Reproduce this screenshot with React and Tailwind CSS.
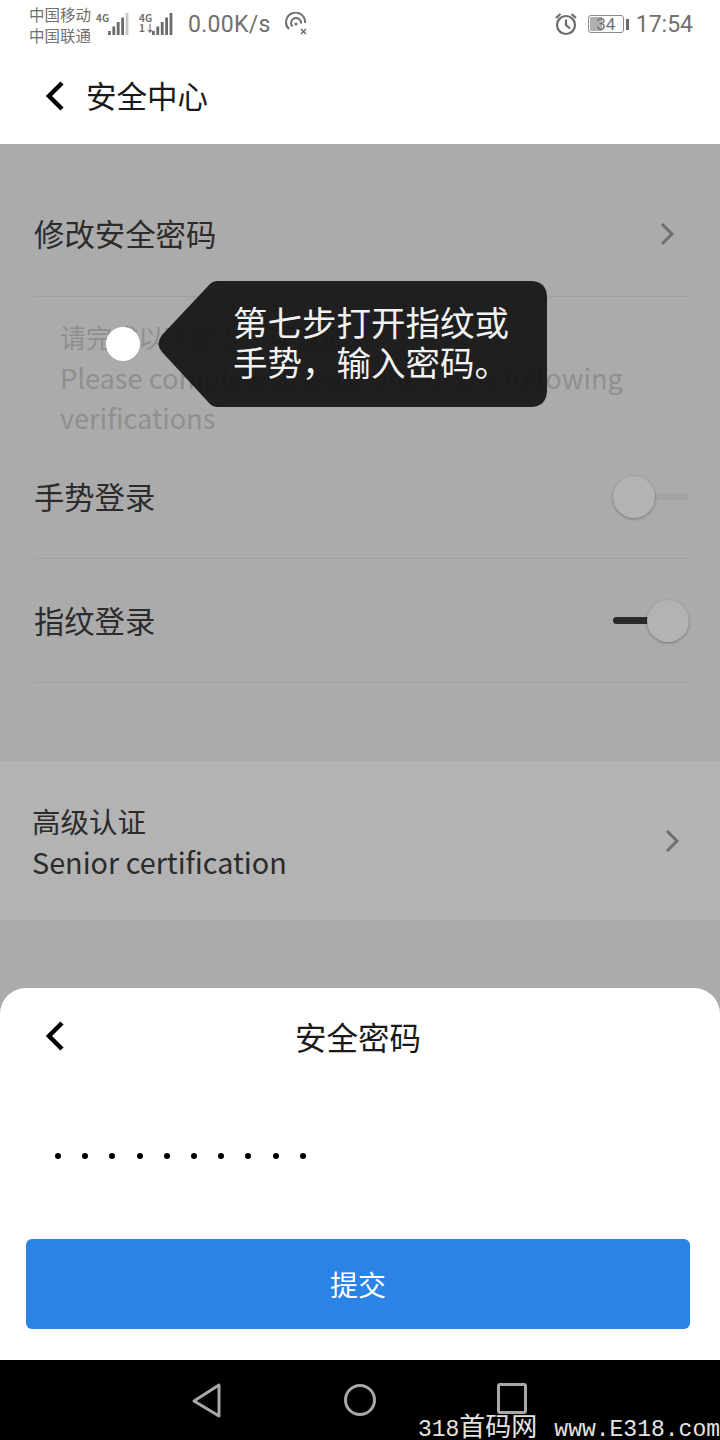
import React from "react";

const cjk = "font-['Noto_Sans_CJK_SC','Noto_Sans',sans-serif]";

const Bars = ({ lit = 5 }) => (
  <svg width="22" height="22" viewBox="0 0 22 22">
    {[0, 1, 2, 3, 4].map((i) => (
      <rect
        key={i}
        x={i * 4.4}
        y={18 - i * 4.500}
        width="2.8"
        height={4 + i * 4.500}
        fill={i < lit ? "#6b6b6b" : "#c8c8c8"}
      />
    ))}
  </svg>
);

const StatusBar = () => (
  <div className="flex h-[48px] items-center bg-white pl-[29px] pr-[27px] text-[#707070]">
    <div className="flex w-[67px] flex-col pt-[1px] text-[15.5px] leading-[21px]">
      <span>中国移动</span>
      <span>中国联通</span>
    </div>
    <div className="flex h-[22px] items-start">
      <div className="w-[12px] text-[10px] leading-[10px] font-bold">4G</div>
      <Bars lit={4} />
      <div className="ml-[9px] flex w-[13px] flex-col text-[10px] leading-[10px] font-bold">
        <span>4G</span>
        <span>1↓</span>
      </div>
      <Bars />
    </div>
    <span className="ml-[14px] pt-[3px] font-['Roboto',sans-serif] text-[23px] tracking-[0.3px]">0.00K/s</span>
    <svg className="ml-[13px]" width="24" height="24" viewBox="0 0 24 24" fill="none" stroke="#707070" strokeWidth="2">
      <path d="M5 17a9.5 9.5 0 1 1 16-6" />
      <path d="M8.5 14.5a5 5 0 1 1 8.5-3" />
      <circle cx="12" cy="12" r="1.6" fill="#707070" stroke="none" />
      <path d="M17 17l5 5M22 17l-5 5" strokeWidth="1.6" />
    </svg>
    <div className="ml-auto flex items-center">
      <svg width="24" height="26" viewBox="0 0 24 26" fill="none" stroke="#6b6b6b" strokeWidth="2.2">
        <circle cx="12" cy="14" r="9" />
        <path d="M12 8.5V14l4 3.5M2 7l4.5-4M22 7l-4.500-4" />
      </svg>
      <div className="relative ml-[10px] flex h-[18px] w-[36px] items-center justify-center overflow-hidden rounded-[3px] border border-[#8a8a8a] font-['Roboto',sans-serif] text-[17px] leading-none">
        <div className="absolute inset-y-[1px] left-[1px] w-[12px] bg-[#b0b0b0]" />
        <span className="relative">34</span>
      </div>
      <div className="ml-[2px] h-[11px] w-[3px] bg-[#6b6b6b]" />
      <span className="ml-[7px] pt-[3px] font-['Roboto',sans-serif] text-[23px]">17:54</span>
    </div>
  </div>
);

const Back = ({ className }) => (
  <svg className={className} width="20" height="32" viewBox="0 0 20 32" fill="none" stroke="#000" strokeWidth="4.500">
    <path d="M17 3 L4 16 L17 29" />
  </svg>
);

const Chevron = () => (
  <svg width="16" height="26" viewBox="0 0 16 26" fill="none" stroke="#6f6f6f" strokeWidth="3">
    <path d="M3 3 L13 13 L3 23" />
  </svg>
);

const Toggle = ({ on }) => (
  <div className="relative mt-[1px] h-[42px] w-[76px]">
    <div className={`absolute inset-x-0 top-[17px] h-[7px] rounded-full ${on ? "bg-[#2a2a2a]" : "bg-[#a3a3a3]"}`} />
    <div
      className={`absolute top-0 h-[42px] w-[42px] rounded-full bg-[#b3b3b3] shadow-[0_1px_3px_rgba(0,0,0,0.3)] ${on ? "right-0" : "left-0"}`}
    />
  </div>
);

const Row = ({ label, on }) => (
  <div className="flex h-[124px] items-center justify-between border-b border-[#a0a0a0]">
    <span className="ml-[1px] text-[30.3px] leading-none text-[#2b2b2b]">{label}</span>
    <Toggle on={on} />
  </div>
);

const Tooltip = () => (
  <div className="absolute top-[136px] left-[106px] flex items-center">
    <div className="h-[34px] w-[34px] rounded-full bg-white" />
    <div className="relative ml-[18px] h-[128px] w-[390px]">
      <svg className="absolute inset-0" width="390" height="128" viewBox="0 0 390 128">
        <path
          d="M4 55 L52 4 Q55 1 60 1 L372 1 Q389 1 389 18 L389 110 Q389 127 372 127 L60 127 Q55 127 52 124 L4 72 Q-3 64 4 55 Z"
          fill="#0f0f0f"
          fillOpacity="0.9"
        />
      </svg>
      <div className="absolute top-[21px] left-[75px] text-[34.5px] leading-[40px] whitespace-nowrap text-[#f2f2f2]">
        <div>第七步打开指纹或</div>
        <div>手势，输入密码。</div>
      </div>
    </div>
  </div>
);

const Sheet = () => (
  <div className="absolute inset-x-0 bottom-0 h-[372px] rounded-t-[26px] bg-white">
    <div className="relative flex h-[100px] items-center justify-center pr-[4px] pb-[2px]">
      <Back className="absolute top-[32px] left-[45px]" />
      <span className="text-[31.5px] leading-none text-[#1a1a1a]">安全密码</span>
    </div>
    <div className="flex h-[82px] items-end gap-[21.2px] pb-[11px] pl-[55px]">
      {Array.from({ length: 10 }).map((_, i) => (
        <div key={i} className="h-[6px] w-[6px] rounded-full bg-black" />
      ))}
    </div>
    <div className="mt-[69px] mr-[30px] ml-[26px] flex h-[90px] items-center justify-center rounded-[6px] bg-[#2b83e6] text-[28px] text-white">
      提交
    </div>
  </div>
);

const NavBar = () => (
  <div className="relative flex h-[80px] items-start justify-center gap-[120px] bg-black pt-[23px] pr-[2px]">
    <svg width="32" height="36" viewBox="0 0 32 36" fill="none" stroke="#a8a8a8" strokeWidth="3" strokeLinejoin="round">
      <path d="M28 2 L3 18 L28 33 Z" />
    </svg>
    <svg width="34" height="34" viewBox="0 0 34 34" fill="none" stroke="#a8a8a8" strokeWidth="3">
      <circle cx="17" cy="17" r="14.500" />
    </svg>
    <div className="h-[31px] w-[30px] rounded-[3px] border-[3px] border-[#a8a8a8]" />
    <div className="absolute right-0 -bottom-[4px] flex items-baseline font-['Liberation_Mono','Noto_Sans_CJK_SC',monospace] text-[23px] leading-[28px] whitespace-nowrap text-[#e4e4e4]">
      <span>318</span>
      <span className="text-[26px]">首码网</span>
      <span className="ml-[17px]">www.E318.com</span>
    </div>
  </div>
);

export default function App() {
  return (
    <div className={`flex h-[1440px] w-[720px] flex-col overflow-hidden bg-white ${cjk}`}>
      <StatusBar />
      <div className="flex h-[96px] items-center bg-white pl-[45px]">
        <Back />
        <span className="ml-[21px] pb-[1px] text-[30.5px] leading-none text-[#1a1a1a]">安全中心</span>
      </div>

      <div className="relative flex h-[1216px] flex-col bg-[#ababab]">
        <div className="mr-[31px] ml-[33px] flex h-[153px] items-center justify-between border-b border-[#a0a0a0] pr-[14px] pt-[27px]">
          <span className="ml-[1px] text-[30.4px] leading-none text-[#2b2b2b]">修改安全密码</span>
          <Chevron />
        </div>

        <div className="px-[60px] pt-[20px] text-[27.2px] leading-[40px] text-[#8f8f8f]">
          <div className="text-[26px]">请完成以下至少一项验证</div>
          <div>Please complete at least one of the following verifications</div>
        </div>

        <div className="mr-[31px] ml-[33px] -mt-[2px]">
          <Row label="手势登录" />
          <Row label="指纹登录" on />
        </div>

        <div className="mt-[78px] flex h-[159px] items-center justify-between bg-[#b3b3b3] pr-[40px] pl-[32px]">
          <div className="text-[#2b2b2b]">
            <div className="text-[28.5px] leading-[41px]">高级认证</div>
            <div className="text-[28.8px] leading-[41px]">Senior certification</div>
          </div>
          <Chevron />
        </div>

        <Tooltip />
        <Sheet />
      </div>

      <NavBar />
    </div>
  );
}
